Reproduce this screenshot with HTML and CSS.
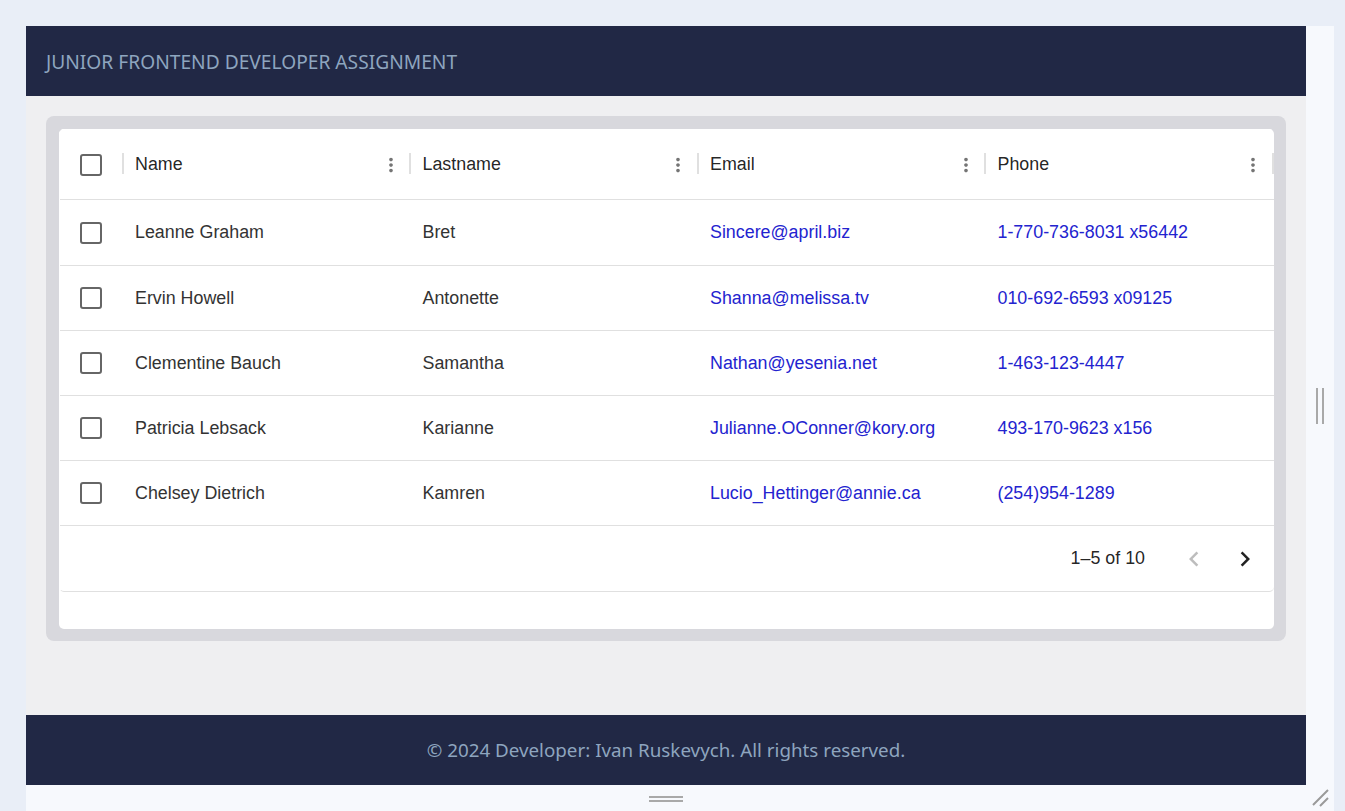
FILE: index.html
```html
<!DOCTYPE html>
<html lang="en">
<head>
<meta charset="utf-8">
<title>Junior Frontend Developer Assignment</title>
<link rel="stylesheet" href="styles.css">
</head>
<body>
<div class="frame">
  <div class="app">
    <header class="app-header">
      <h1 class="app-title">JUNIOR FRONTEND DEVELOPER ASSIGNMENT</h1>
    </header>
    <main class="app-main">
      <section class="card">
        <div class="paper">
          <div class="grid">
            <div class="row head">
              <div class="cell check"><span class="box"></span></div>
              <div class="cell col-head"><span class="sep first"></span><span class="title">Name</span><svg class="menu" viewBox="0 0 24 24"><path d="M12 8c1.1 0 2-.9 2-2s-.9-2-2-2-2 .9-2 2 .9 2 2 2zm0 2c-1.1 0-2 .9-2 2s.9 2 2 2 2-.9 2-2-.9-2-2-2zm0 6c-1.1 0-2 .9-2 2s.9 2 2 2 2-.9 2-2-.9-2-2-2z"/></svg><span class="sep"></span></div>
              <div class="cell col-head"><span class="title">Lastname</span><svg class="menu" viewBox="0 0 24 24"><path d="M12 8c1.1 0 2-.9 2-2s-.9-2-2-2-2 .9-2 2 .9 2 2 2zm0 2c-1.1 0-2 .9-2 2s.9 2 2 2 2-.9 2-2-.9-2-2-2zm0 6c-1.1 0-2 .9-2 2s.9 2 2 2 2-.9 2-2-.9-2-2-2z"/></svg><span class="sep"></span></div>
              <div class="cell col-head"><span class="title">Email</span><svg class="menu" viewBox="0 0 24 24"><path d="M12 8c1.1 0 2-.9 2-2s-.9-2-2-2-2 .9-2 2 .9 2 2 2zm0 2c-1.1 0-2 .9-2 2s.9 2 2 2 2-.9 2-2-.9-2-2-2zm0 6c-1.1 0-2 .9-2 2s.9 2 2 2 2-.9 2-2-.9-2-2-2z"/></svg><span class="sep"></span></div>
              <div class="cell col-head"><span class="title">Phone</span><svg class="menu" viewBox="0 0 24 24"><path d="M12 8c1.1 0 2-.9 2-2s-.9-2-2-2-2 .9-2 2 .9 2 2 2zm0 2c-1.1 0-2 .9-2 2s.9 2 2 2 2-.9 2-2-.9-2-2-2zm0 6c-1.1 0-2 .9-2 2s.9 2 2 2 2-.9 2-2-.9-2-2-2z"/></svg><span class="sep"></span></div>
            </div>
            <div class="row">
              <div class="cell check"><span class="box"></span></div>
              <div class="cell">Leanne Graham</div>
              <div class="cell">Bret</div>
              <div class="cell link">Sincere@april.biz</div>
              <div class="cell link">1-770-736-8031 x56442</div>
            </div>
            <div class="row">
              <div class="cell check"><span class="box"></span></div>
              <div class="cell">Ervin Howell</div>
              <div class="cell">Antonette</div>
              <div class="cell link">Shanna@melissa.tv</div>
              <div class="cell link">010-692-6593 x09125</div>
            </div>
            <div class="row">
              <div class="cell check"><span class="box"></span></div>
              <div class="cell">Clementine Bauch</div>
              <div class="cell">Samantha</div>
              <div class="cell link">Nathan@yesenia.net</div>
              <div class="cell link">1-463-123-4447</div>
            </div>
            <div class="row">
              <div class="cell check"><span class="box"></span></div>
              <div class="cell">Patricia Lebsack</div>
              <div class="cell">Karianne</div>
              <div class="cell link">Julianne.OConner@kory.org</div>
              <div class="cell link">493-170-9623 x156</div>
            </div>
            <div class="row">
              <div class="cell check"><span class="box"></span></div>
              <div class="cell">Chelsey Dietrich</div>
              <div class="cell">Kamren</div>
              <div class="cell link">Lucio_Hettinger@annie.ca</div>
              <div class="cell link">(254)954-1289</div>
            </div>
            <div class="grid-footer">
              <span class="count">1–5 of 10</span>
              <button class="pager disabled" aria-label="Previous page"><svg viewBox="0 0 24 24"><path d="M15.41 7.41 14 6l-6 6 6 6 1.41-1.41L10.830 12z"/></svg></button>
              <button class="pager" aria-label="Next page"><svg viewBox="0 0 24 24"><path d="M10 6 8.59 7.41 13.17 12l-4.58 4.59L10 18l6-6z"/></svg></button>
            </div>
          </div>
        </div>
      </section>
    </main>
    <footer class="app-footer">© 2024 Developer: Ivan Ruskevych. All rights reserved.</footer>
  </div>
  <div class="side-strip"><span class="vhandle"></span></div>
  <div class="bottom-strip"><span class="hhandle"></span></div>
  <div class="corner">
    <svg class="resize" viewBox="0 0 28 26"><path d="M7 20 L22 5 M14 21 L22 13"/></svg>
  </div>
</div>
</body>
</html>
```
FILE: styles.css
```css
* { box-sizing: border-box; }

html, body {
  margin: 0;
  padding: 0;
  height: 100%;
  overflow: hidden;
}

body {
  background: #e9eef7;
  font-family: "Liberation Sans", Arial, sans-serif;
}

.frame {
  margin: 26px 0 0 26px;
  width: 1308px;
  background: #f7f9fd;
  display: grid;
  grid-template-columns: 1280px 28px;
  grid-template-rows: 759px 40px;
}

.app {
  display: flex;
  flex-direction: column;
  background: #efeff1;
}

.app-header {
  height: 70px;
  background: #212845;
  display: flex;
  align-items: center;
  padding: 0 20px;
}

.app-title {
  margin: 0;
  font-family: "Noto Sans", "Open Sans", sans-serif;
  font-weight: 400;
  font-size: 19.2px;
  color: #8ea5bf;
  letter-spacing: 0;
}

.app-main {
  flex: 1;
  padding: 20px;
}

.card {
  background: #d8d8dd;
  border-radius: 8px;
  padding: 13px 12px 12px 13px;
}

.paper {
  background: #fff;
  border-radius: 5px;
  height: 500px;
  overflow: hidden;
}

.grid {
  border-top: 1px solid #fff;
  border-left: 1px solid #fff;
  border-bottom: 1px solid #e0e0e0;
  border-radius: 0 0 5px 5px;
  overflow: hidden;
  font-size: 17.85px;
  color: rgba(0, 0, 0, 0.87);
}

.row {
  display: grid;
  grid-template-columns: 62.5px repeat(4, 287.5px);
  height: 65px;
  border-bottom: 1px solid #e0e0e0;
  white-space: nowrap;
}

.row.head {
  height: 70px;
}

.row.head + .row {
  height: 66px;
}

.cell {
  display: flex;
  align-items: center;
  padding: 0 12.5px;
  color: #333;
}

.cell.link {
  color: #2323cf;
}

.cell.check {
  justify-content: center;
  padding: 0;
}

.box {
  width: 22px;
  height: 22px;
  border: 2.5px solid #666;
  border-radius: 3px;
}

.col-head {
  position: relative;
  color: rgba(0, 0, 0, 0.87);
}

.col-head .title {
  flex: 1;
}

.menu {
  width: 22px;
  height: 22px;
  fill: #757575;
  margin-right: -4px;
}

.sep {
  position: absolute;
  right: -1px;
  top: 23px;
  width: 2px;
  height: 21px;
  background: #e0e0e0;
}

.sep.first {
  left: -1px;
  right: auto;
}

.grid-footer {
  height: 65px;
  display: flex;
  align-items: center;
  justify-content: flex-end;
  padding-right: 8px;
  font-size: 17.85px;
  color: rgba(0, 0, 0, 0.87);
}

.count {
  margin-right: 19px;
}

.pager {
  width: 42px;
  height: 42px;
  margin-left: 9px;
  border: 0;
  background: none;
  padding: 0;
  display: flex;
  align-items: center;
  justify-content: center;
}

.pager svg {
  width: 30px;
  height: 30px;
  fill: #222;
}

.pager.disabled svg {
  fill: #bdbdbd;
}

.app-footer {
  height: 70px;
  background: #212845;
  display: flex;
  align-items: center;
  justify-content: center;
  font-family: "Noto Sans", "Open Sans", sans-serif;
  font-size: 18.8px;
  color: #8ea5bf;
}

.side-strip {
  display: flex;
  align-items: center;
  justify-content: center;
}

.vhandle {
  width: 8px;
  height: 36px;
  border-left: 2px solid #a9a9a9;
  border-right: 2px solid #a9a9a9;
}

.bottom-strip {
  display: flex;
  justify-content: center;
  padding-top: 11px;
}

.hhandle {
  width: 34px;
  height: 6px;
  border-top: 2px solid #a9a9a9;
  border-bottom: 2px solid #a9a9a9;
}

.corner {
  position: relative;
}

.resize {
  width: 28px;
  height: 26px;
  stroke: #9a9a9a;
  stroke-width: 2;
  fill: none;
}
```
